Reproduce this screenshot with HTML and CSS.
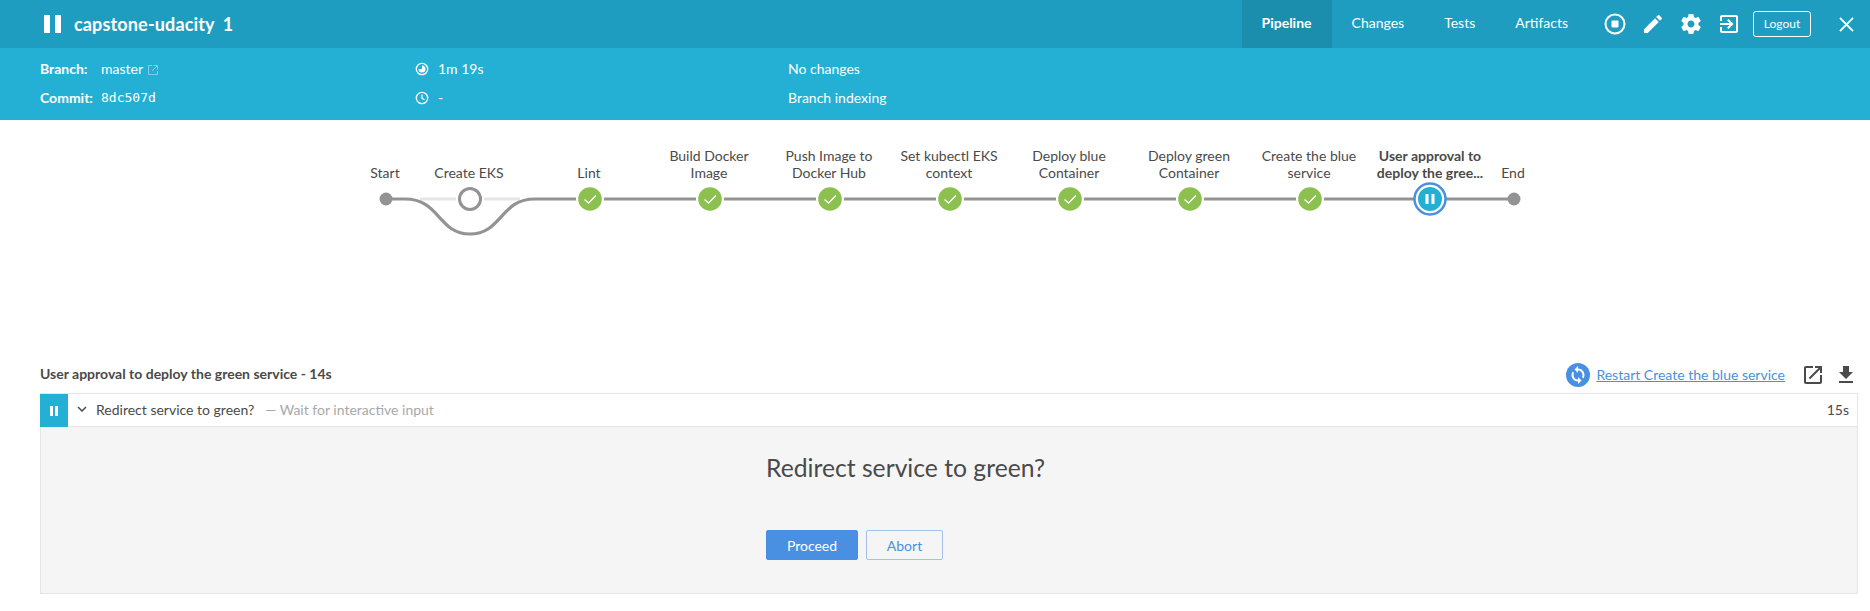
FILE: index.html
```html
<!DOCTYPE html>
<html lang="en">
<head>
<meta charset="utf-8">
<title>capstone-udacity 1</title>
<link rel="stylesheet" href="styles.css">
</head>
<body>
<header class="topbar">
  <svg class="run-pause" viewBox="0 0 17 18"><rect x="0" y="0" width="6" height="18"/><rect x="11" y="0" width="6" height="18"/></svg>
  <h1 class="run-title"><span>capstone-udacity</span><span class="run-number">1</span></h1>
  <nav class="tabs">
    <a class="tab tab-active">Pipeline</a>
    <a class="tab">Changes</a>
    <a class="tab">Tests</a>
    <a class="tab">Artifacts</a>
  </nav>
  <div class="actions">
    <svg class="action" viewBox="0 0 24 24"><circle cx="12" cy="12" r="9.5" fill="none" stroke="#fff" stroke-width="2"/><rect x="8.5" y="8.5" width="7" height="7" rx="1" fill="#fff"/></svg>
    <svg class="action" viewBox="0 0 24 24"><path d="M3 17.25V21h3.75L17.81 9.94l-3.75-3.75L3 17.25zM20.71 7.04c.39-.39.39-1.02 0-1.41l-2.34-2.34c-.39-.39-1.02-.39-1.41 0l-1.83 1.83 3.75 3.75 1.83-1.83z"/></svg>
    <svg class="action" viewBox="0 0 24 24"><path d="M19.43 12.98c.04-.32.07-.64.07-.98s-.03-.66-.07-.98l2.11-1.65c.19-.15.24-.42.12-.64l-2-3.46c-.12-.22-.39-.3-.61-.22l-2.49 1c-.52-.4-1.08-.73-1.69-.98l-.38-2.65C14.46 2.18 14.25 2 14 2h-4c-.25 0-.46.18-.49.42l-.38 2.65c-.61.25-1.17.59-1.69.98l-2.49-1c-.23-.09-.49 0-.61.22l-2 3.46c-.13.22-.07.49.12.64l2.11 1.65c-.04.32-.07.65-.07.98s.03.66.07.98l-2.11 1.65c-.19.15-.24.42-.12.64l2 3.46c.12.22.39.3.61.22l2.49-1c.52.4 1.08.73 1.69.98l.38 2.65c.03.24.24.42.49.42h4c.25 0 .46-.18.49-.42l.38-2.65c.61-.25 1.17-.59 1.69-.98l2.49 1c.23.09.49 0 .61-.22l2-3.46c.12-.22.07-.49-.12-.64l-2.11-1.65zM12 15.5c-1.93 0-3.5-1.57-3.5-3.5s1.57-3.5 3.5-3.5 3.5 1.57 3.5 3.5-1.57 3.5-3.5 3.5z"/></svg>
    <svg class="action action-last" viewBox="0 0 24 24"><path d="M10.09 15.59L11.5 17l5-5-5-5-1.41 1.41L12.67 11H3v2h9.67l-2.58 2.59zM19 3H5c-1.11 0-2 .9-2 2v4h2V5h14v14H5v-4H3v4c0 1.1.89 2 2 2h14c1.1 0 2-.9 2-2V5c0-1.1-.9-2-2-2z"/></svg>
    <a class="logout">Logout</a>
    <svg class="close" viewBox="0 0 16 16"><path d="M1 1L15 15M15 1L1 15" stroke="#fff" stroke-width="2" fill="none"/></svg>
  </div>
</header>

<section class="meta">
  <div class="meta-col meta-col-branch">
    <div class="meta-row"><b class="meta-key">Branch:</b><span>master</span><svg class="ext" viewBox="0 0 12 12"><path d="M5 1.500H1.500V10.500H10.500V7M6.500 1.500H10.500V5.500M10.500 1.500L5 7" fill="none" stroke="#7fd0e6" stroke-width="1"/></svg></div>
    <div class="meta-row"><b class="meta-key">Commit:</b><code class="sha">8dc507d</code></div>
  </div>
  <div class="meta-col meta-col-time">
    <div class="meta-row"><svg class="clock" viewBox="0 0 14 14"><circle cx="7" cy="7" r="5.700" fill="none" stroke="#fff" stroke-width="1.300"/><path d="M7 3.500A3.500 3.500 0 1 1 3.500 7H7z" fill="#fff"/></svg><span>1m 19s</span></div>
    <div class="meta-row"><svg class="clock" viewBox="0 0 14 14"><circle cx="7" cy="7" r="5.700" fill="none" stroke="#fff" stroke-width="1.300"/><path d="M7 3.500V7.300L9.500 8.800" fill="none" stroke="#fff" stroke-width="1.200"/></svg><span>-</span></div>
  </div>
  <div class="meta-col">
    <div class="meta-row">No changes</div>
    <div class="meta-row">Branch indexing</div>
  </div>
</section>

<section class="graph">
  <svg class="graph-svg" viewBox="0 0 1870 240">
    <path class="track" d="M420 79H456M484 79H520"/>
    <path class="line" d="M386 79H405C440 79 438 114 470 114C502 114 500 79 535 79H1513"/>
    <circle class="halo" cx="590" cy="79" r="14"/><circle class="halo" cx="710" cy="79" r="14"/><circle class="halo" cx="830" cy="79" r="14"/><circle class="halo" cx="950" cy="79" r="14"/><circle class="halo" cx="1070" cy="79" r="14"/><circle class="halo" cx="1190" cy="79" r="14"/><circle class="halo" cx="1310" cy="79" r="14"/>
    <circle class="dot" cx="386" cy="79" r="6.500"/>
    <circle class="dot" cx="1514" cy="79" r="6.500"/>
    <circle class="skipped" cx="470" cy="79" r="10.500"/>
    <g class="ok"><circle cx="590" cy="79" r="11.800"/><path d="M584.500 79.500L588.500 83L596 75.500"/></g>
    <g class="ok"><circle cx="710" cy="79" r="11.800"/><path d="M704.500 79.500L708.500 83L716 75.500"/></g>
    <g class="ok"><circle cx="830" cy="79" r="11.800"/><path d="M824.500 79.500L828.500 83L836 75.500"/></g>
    <g class="ok"><circle cx="950" cy="79" r="11.800"/><path d="M944.500 79.500L948.500 83L956 75.500"/></g>
    <g class="ok"><circle cx="1070" cy="79" r="11.800"/><path d="M1064.500 79.500L1068.500 83L1076 75.500"/></g>
    <g class="ok"><circle cx="1190" cy="79" r="11.800"/><path d="M1184.500 79.500L1188.500 83L1196 75.500"/></g>
    <g class="ok"><circle cx="1310" cy="79" r="11.800"/><path d="M1304.500 79.500L1308.500 83L1316 75.500"/></g>
    <circle class="pause-ring" cx="1430" cy="79" r="15.500"/>
    <circle class="pause-fill" cx="1430" cy="79" r="12"/>
    <rect class="pause-bar" x="1425.500" y="74" width="3" height="10"/>
    <rect class="pause-bar" x="1431.500" y="74" width="3" height="10"/>
  </svg>
  <div class="node-label pos-start">Start</div>
  <div class="node-label pos-eks">Create EKS</div>
  <div class="node-label pos-lint">Lint</div>
  <div class="node-label pos-build">Build Docker<br>Image</div>
  <div class="node-label pos-push">Push Image to<br>Docker Hub</div>
  <div class="node-label pos-kube">Set kubectl EKS<br>context</div>
  <div class="node-label pos-blue">Deploy blue<br>Container</div>
  <div class="node-label pos-green">Deploy green<br>Container</div>
  <div class="node-label pos-svc">Create the blue<br>service</div>
  <div class="node-label node-label-active pos-user">User approval to<br>deploy the gree...</div>
  <div class="node-label pos-end">End</div>
</section>

<main class="detail">
  <div class="detail-head">
    <strong class="detail-title">User approval to deploy the green service - 14s</strong>
    <div class="detail-tools">
      <svg class="restart-icon" viewBox="0 0 24 24"><circle cx="12" cy="12" r="12" fill="#4a90e2"/><path fill="#fff" d="M12 5.500V3L8.500 6.500 12 10V7.500c2.500 0 4.500 2 4.500 4.500 0 .8-.2 1.500-.5 2.100l1.300 1.300c.7-1 1.200-2.100 1.200-3.400 0-3.600-2.900-6.500-6.500-6.500zm0 11c-2.500 0-4.500-2-4.500-4.500 0-.8.2-1.500.5-2.100L6.700 8.600C6 9.600 5.500 10.700 5.500 12c0 3.600 2.900 6.500 6.500 6.500V21l3.500-3.500L12 14z"/></svg>
      <a class="restart-link">Restart Create the blue service</a>
      <svg class="tool-icon" viewBox="0 0 24 24"><path d="M19 19H5V5h7V3H5c-1.110 0-2 .9-2 2v14c0 1.100.89 2 2 2h14c1.100 0 2-.9 2-2v-7h-2v7zM14 3v2h3.590l-9.830 9.830 1.410 1.410L19 6.410V10h2V3h-7z"/></svg>
      <svg class="tool-icon" viewBox="0 0 24 24"><path d="M19 9h-4V3H9v6H5l7 7 7-7zM5 18v2h14v-2H5z"/></svg>
    </div>
  </div>
  <div class="step">
    <div class="step-status"><svg class="step-pause" viewBox="0 0 8 10"><rect width="3" height="10"/><rect x="5" width="3" height="10"/></svg></div>
    <svg class="chevron" viewBox="0 0 10 6"><path d="M1 1L5 5L9 1"/></svg>
    <span class="step-name">Redirect service to green?</span>
    <span class="step-desc">— Wait for interactive input</span>
    <span class="step-time">15s</span>
  </div>
  <div class="input-panel">
    <h2 class="input-title">Redirect service to green?</h2>
    <div class="input-buttons">
      <button class="btn btn-primary">Proceed</button>
      <button class="btn btn-outline">Abort</button>
    </div>
  </div>
</main>
</body>
</html>
```

FILE: styles.css
```css
* { box-sizing: border-box; }
html, body { margin: 0; padding: 0; }
body {
  width: 1870px;
  height: 611px;
  overflow: hidden;
  background: #fff;
  color: #4a4a4a;
  font-family: Lato, "Liberation Sans", sans-serif;
  font-size: 14px;
}

.topbar {
  height: 48px;
  display: flex;
  align-items: center;
  background: #1e9dc1;
  color: #fff;
  padding-left: 44px;
}
.run-pause { width: 17px; height: 18px; fill: #fff; margin-right: 13px; }
.run-title {
  margin: 0;
  font-size: 18px;
  font-weight: 700;
  letter-spacing: 0.15px;
  display: flex;
  gap: 8px;
}
.tabs { display: flex; margin-left: auto; height: 48px; }
.tab {
  padding: 0 20px;
  line-height: 46px;
  color: #fff;
  font-size: 14px;
}
.tab-active { background: #1b8dad; font-weight: 700; }
.actions { display: flex; align-items: center; margin-left: 15px; }
.action { width: 24px; height: 24px; fill: #fff; margin-right: 14px; }
.action-last { margin-right: 12px; }
.logout {
  width: 58px;
  height: 26px;
  border: 1px solid #fff;
  border-radius: 3px;
  font-size: 12px;
  line-height: 24px;
  text-align: center;
}
.close { width: 15px; height: 15px; margin-left: 28px; margin-right: 16px; }

.meta {
  height: 72px;
  display: flex;
  background: #24b0d5;
  color: #fff;
  padding: 6px 0 0 40px;
  font-size: 14px;
}
.meta-col-branch { width: 375px; }
.meta-col-time { width: 373px; }
.meta-row { height: 29px; display: flex; align-items: center; }
.meta-key { width: 61px; font-weight: 700; }
.ext { width: 12px; height: 12px; margin-left: 4px; margin-top: 3px; }
.sha { font-family: "DejaVu Sans Mono", monospace; font-size: 13px; }
.clock { width: 14px; height: 14px; margin-right: 9px; }

.graph { position: relative; height: 240px; }
.graph-svg { position: absolute; left: 0; top: 0; width: 1870px; height: 240px; }
.track { fill: none; stroke: #e5e5e5; stroke-width: 3.200; }
.line { fill: none; stroke: #949393; stroke-width: 3.200; }
.halo { fill: #fff; }
.dot { fill: #949393; }
.skipped { fill: #fff; stroke: #949393; stroke-width: 3; }
.ok circle { fill: #8cc04f; }
.ok path { fill: none; stroke: #fff; stroke-width: 1.300; }
.pause-ring { fill: #fff; stroke: #4a90e2; stroke-width: 2.500; }
.pause-fill { fill: #24b0d5; }
.pause-bar { fill: #fff; }

.node-label {
  position: absolute;
  bottom: 179px;
  width: 130px;
  transform: translateX(-50%);
  text-align: center;
  font-size: 14px;
  line-height: 17px;
  color: #4a4a4a;
}
.node-label-active { font-weight: 700; }
.pos-start { left: 385px; }
.pos-eks { left: 469px; }
.pos-lint { left: 589px; }
.pos-build { left: 709px; }
.pos-push { left: 829px; }
.pos-kube { left: 949px; }
.pos-blue { left: 1069px; }
.pos-green { left: 1189px; }
.pos-svc { left: 1309px; }
.pos-user { left: 1430px; }
.pos-end { left: 1513px; }

.detail { padding: 0 12px 0 40px; }
.detail-head {
  height: 33px;
  padding-bottom: 6px;
  display: flex;
  align-items: center;
  justify-content: space-between;
}
.detail-title { font-size: 14px; font-weight: 700; }
.detail-tools { display: flex; align-items: center; margin-top: 2px; }
.restart-icon { width: 24px; height: 24px; margin-right: 6px; }
.restart-link { color: #4a90e2; text-decoration: underline; font-size: 14px; margin-right: 14px; }
.tool-icon { width: 24px; height: 24px; fill: #4a4a4a; margin-left: 2px; margin-right: 7px; }
.tool-icon:last-child { margin-right: 0; }

.step {
  height: 34px;
  display: flex;
  align-items: center;
  border: 1px solid #e5e5e5;
  border-left: 0;
  padding-right: 8px;
  padding-bottom: 2px;
}
.step-status {
  width: 28px;
  height: 33px;
  align-self: flex-start;
  display: flex;
  align-items: center;
  justify-content: center;
  background: #24b0d5;
}
.step-pause { width: 8px; height: 10px; fill: #fff; }
.chevron { width: 10px; height: 6px; margin-left: 9px; margin-right: 9px; }
.chevron path { fill: none; stroke: #4a4a4a; stroke-width: 1.500; }
.step-name { font-size: 14px; }
.step-desc { font-size: 14px; color: #a9a9a9; margin-left: 11px; }
.step-time { margin-left: auto; font-size: 14px; }

.input-panel {
  height: 167px;
  background: #f5f5f5;
  border: 1px solid #e5e5e5;
  border-top: 0;
  padding-left: 725px;
  padding-top: 26px;
}
.input-title {
  margin: 0;
  font-size: 24.7px;
  font-weight: 400;
  line-height: 30px;
  color: #4a4a4a;
}
.input-buttons { display: flex; gap: 8px; margin-top: 47px; }
.btn {
  height: 30px;
  border-radius: 2px;
  font-family: Lato, "Liberation Sans", sans-serif;
  font-size: 14px;
  padding: 0;
}
.btn-primary { width: 92px; background: #4a90e2; border: 1px solid #4a90e2; color: #fff; }
.btn-outline { width: 77px; background: transparent; border: 1px solid #a4c2e8; color: #4a90e2; }
```
